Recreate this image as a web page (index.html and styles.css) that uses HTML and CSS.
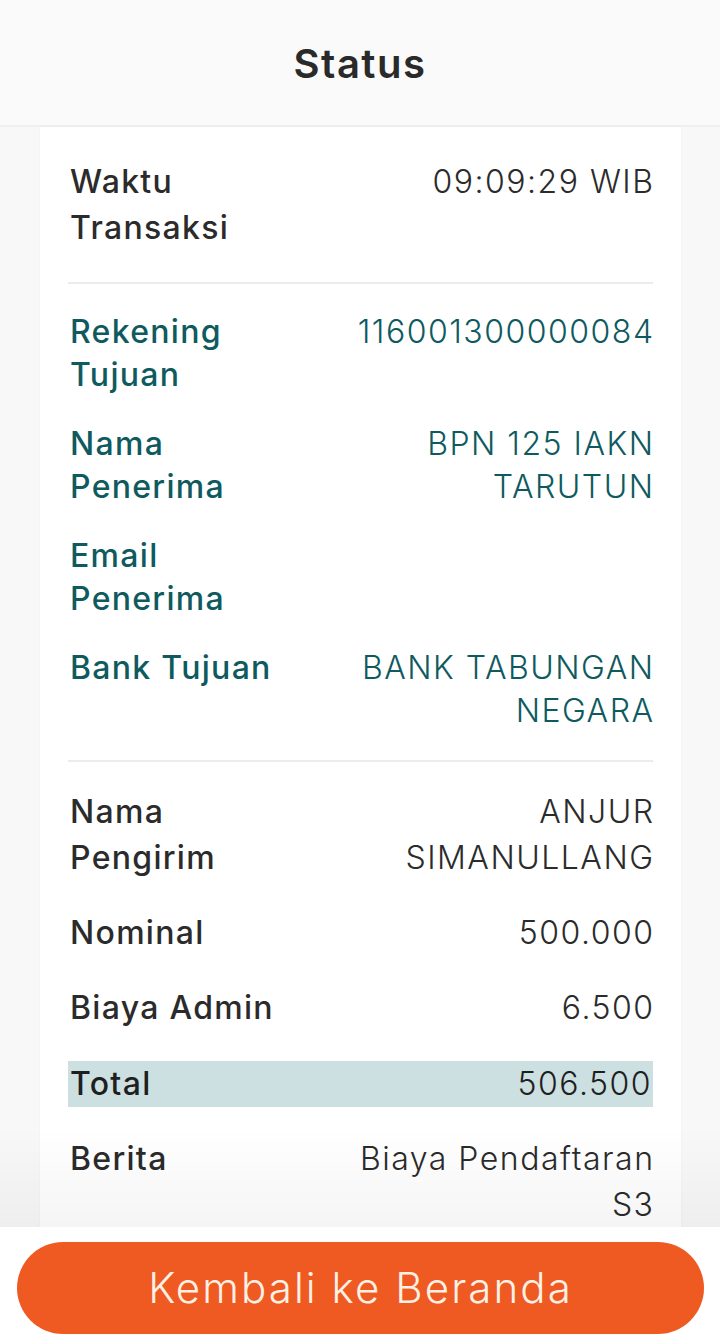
FILE: index.html
```html
<!DOCTYPE html>
<html lang="id">
<head>
<meta charset="utf-8">
<title>Status</title>
<link rel="stylesheet" href="styles.css">
</head>
<body>
<header class="topbar"><h1 class="title">Status</h1></header>
<main class="content">
  <section class="card">
    <div class="group group-first">
      <div class="row"><div class="label">Waktu Transaksi</div><div class="value">09:09:29 WIB</div></div>
    </div>
    <hr class="divider">
    <div class="group group-teal">
      <div class="row"><div class="label">Rekening Tujuan</div><div class="value">116001300000084</div></div>
      <div class="row"><div class="label">Nama Penerima</div><div class="value">BPN 125 IAKN TARUTUN</div></div>
      <div class="row"><div class="label">Email Penerima</div><div class="value"></div></div>
      <div class="row"><div class="label">Bank Tujuan</div><div class="value">BANK TABUNGAN NEGARA</div></div>
    </div>
    <hr class="divider">
    <div class="group group-dark">
      <div class="row"><div class="label">Nama Pengirim</div><div class="value">ANJUR SIMANULLANG</div></div>
      <div class="row"><div class="label">Nominal</div><div class="value">500.000</div></div>
      <div class="row"><div class="label">Biaya Admin</div><div class="value">6.500</div></div>
      <div class="row row-total"><div class="label">Total</div><div class="value">506.500</div></div>
      <div class="row"><div class="label">Berita</div><div class="value">Biaya Pendaftaran S3</div></div>
    </div>
  </section>
</main>
<footer class="bottombar">
  <button class="btn-home" type="button">Kembali ke Beranda</button>
</footer>
</body>
</html>
```
FILE: styles.css
```css
* { box-sizing: border-box; }
html, body { margin: 0; padding: 0; }
body {
  width: 720px;
  height: 1334px;
  overflow: hidden;
  background: #f8f8f8;
  font-family: Inter, "Open Sans", "Liberation Sans", sans-serif;
  color: #2b2b2b;
}
.topbar {
  height: 127px;
  background: #fafafa;
  border-bottom: 2px solid #efefef;
  display: flex;
  align-items: center;
  justify-content: center;
}
.title {
  margin: 0;
  margin-top: 2px;
  font-size: 40px;
  font-weight: 600;
  color: #2a2a2a;
  letter-spacing: 1.5px;
}
.content {
  padding: 0 39px 0 40px;
}
.card {
  background: #ffffff;
  padding: 18px 28px 80px 30px;
  box-shadow: 0 0 4px rgba(0,0,0,0.03);
}
.row {
  display: flex;
  justify-content: space-between;
  gap: 38px;
}
.label {
  flex: 0 0 215px;
  font-weight: 500;
  font-size: 32px;
  letter-spacing: 1.3px;
}
.value {
  flex: 1 1 auto;
  text-align: right;
  font-weight: 300;
  font-size: 32px;
  letter-spacing: 1.5px;
  margin-right: -1.5px;
}
.group-first .row, .group-dark .row {
  line-height: 46px;
  padding: 14.5px 0;
  color: #2b2b2b;
}
.group-first .row { padding-top: 14px; padding-bottom: 14px; }
.group-teal .row {
  line-height: 43px;
  padding: 13px 0;
  color: #0e5a5f;
}
.group-dark .row.row-total {
  padding: 0;
  margin: 15px 0 15px -2px;
  padding-left: 2px;
  background: #cde0e1;
  color: #1f1f1f;
}
.row-total .value { margin-right: 0; padding-right: 1px; }
.divider {
  border: 0;
  height: 2px;
  background: #ececec;
  margin: 17px 0 12.5px -2px;
}
.group-teal + .divider { margin: 15.5px 0 12.5px -2px; }
.bottombar {
  position: fixed;
  left: 0;
  right: 0;
  bottom: 0;
  height: 107px;
  background: #ffffff;
  padding: 15px 16px 0 17px;
}
.bottombar::before {
  content: "";
  position: absolute;
  left: 0;
  right: 0;
  top: -100px;
  height: 100px;
  background: linear-gradient(to bottom, rgba(0,0,0,0), rgba(0,0,0,0.04));
  pointer-events: none;
}
.btn-home {
  display: block;
  width: 100%;
  height: 92px;
  border: 0;
  border-radius: 46px;
  background: #ef5a23;
  color: #fdf0e4;
  font-family: Inter, "Open Sans", "Liberation Sans", sans-serif;
  font-size: 42px;
  font-weight: 300;
  letter-spacing: 2.1px;
  padding: 0 0 2px;
}
```
